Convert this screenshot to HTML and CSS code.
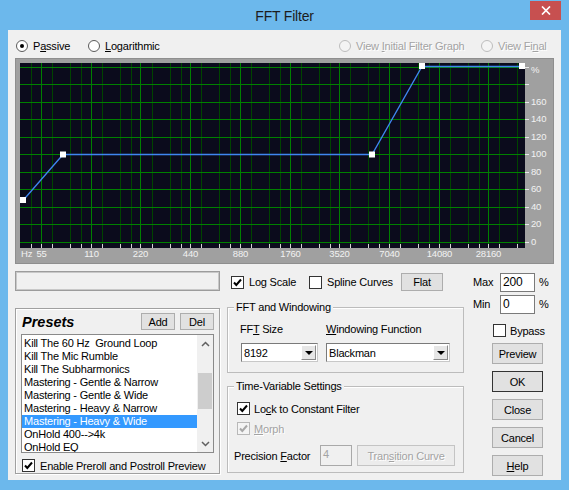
FILE: index.html
```
<!DOCTYPE html>
<html>
<head>
<meta charset="utf-8">
<link rel="stylesheet" href="styles.css">
</head>
<body>
<div class="window">
  <div class="titlebar">
    <span class="title">FFT Filter</span>
    <div class="close"><svg width="10" height="9" viewBox="0 0 10 9"><path d="M1 0.5L9 8.5M9 0.5L1 8.5" stroke="#fff" stroke-width="1.7"/></svg></div>
  </div>
  <div class="client">
    <div class="radio-row">
      <label class="opt w-passive"><span class="radio on"></span><span>P<u>a</u>ssive</span></label>
      <label class="opt w-log"><span class="radio"></span><span><u>L</u>ogarithmic</span></label>
      <label class="opt w-initial dis"><span class="radio"></span><span>View <u>I</u>nitial Filter Graph</span></label>
      <label class="opt dis"><span class="radio"></span><span>View Fi<u>n</u>al</span></label>
    </div>

    <div class="graph">
      <svg width="539" height="206" viewBox="15 57 539 206">
        <rect x="15.5" y="57.5" width="538" height="205" fill="#a0a0a0" stroke="#8e8e8e"/>
        <rect x="20" y="62" width="505" height="185" fill="#0b0b1c"/>
        <path stroke="#004400" stroke-width="1" shape-rendering="crispEdges" d="M31.5 62V247M52.5 62V247M70.5 62V247M81.5 62V247M102.5 62V247M120.5 62V247M131.5 62V247M152.5 62V247M170.5 62V247M181.5 62V247M201.5 62V247M219.5 62V247M230.5 62V247M251.5 62V247M269.5 62V247M280.5 62V247M301.5 62V247M319.5 62V247M330.5 62V247M350.5 62V247M368.5 62V247M379.5 62V247M400.5 62V247M418.5 62V247M429.5 62V247M450.5 62V247M468.5 62V247M479.5 62V247M499.5 62V247M517.5 62V247"/>
        <path stroke="#008000" stroke-width="1" shape-rendering="crispEdges" d="M20 66.5H525M20 83.5H525M20 101.5H525M20 118.5H525M20 136.5H525M20 153.5H525M20 171.5H525M20 188.5H525M20 206.5H525M20 223.5H525M20 241.5H525"/>
        <path stroke="#008000" stroke-width="1" shape-rendering="crispEdges" d="M41.5 62V247M91.5 62V247M140.5 62V247M190.5 62V247M240.5 62V247M290.5 62V247M339.5 62V247M389.5 62V247M439.5 62V247M488.5 62V247"/>
        <path stroke="#d4d4d4" stroke-width="1" shape-rendering="crispEdges" d="M31.5 243V247M41.5 243V247M52.5 243V247M70.5 243V247M81.5 243V247M91.5 243V247M102.5 243V247M120.5 243V247M131.5 243V247M140.5 243V247M152.5 243V247M170.5 243V247M181.5 243V247M190.5 243V247M201.5 243V247M219.5 243V247M230.5 243V247M240.5 243V247M251.5 243V247M269.5 243V247M280.5 243V247M290.5 243V247M301.5 243V247M319.5 243V247M330.5 243V247M339.5 243V247M350.5 243V247M368.5 243V247M379.5 243V247M389.5 243V247M400.5 243V247M418.5 243V247M429.5 243V247M439.5 243V247M450.5 243V247M468.5 243V247M479.5 243V247M488.5 243V247M499.5 243V247M517.5 243V247"/>
        <path stroke="#e8e8e8" stroke-width="1" shape-rendering="crispEdges" d="M525 66.5H529M525 83.5H529M525 101.5H529M525 118.5H529M525 136.5H529M525 153.5H529M525 171.5H529M525 188.5H529M525 206.5H529M525 223.5H529M525 241.5H529"/>
        <polyline points="23,199.5 63,153.5 372,153.5 422,65.5 522,65.5" fill="none" stroke="#3f86f0" stroke-width="1.3"/>
        <rect x="20" y="196" width="6" height="6" fill="#fff"/>
        <rect x="60" y="150.5" width="6" height="6" fill="#fff"/>
        <rect x="369" y="150.5" width="6" height="6" fill="#fff"/>
        <rect x="419" y="62" width="6" height="6" fill="#fff"/>
        <rect x="519" y="62" width="6" height="6" fill="#fff"/>
        <g font-family="Liberation Sans, Arial, sans-serif" font-size="9.5" fill="#f2f2f2">
          <text x="531" y="72">%</text>
          <text x="531" y="104">160</text>
          <text x="531" y="121">140</text>
          <text x="531" y="139">120</text>
          <text x="531" y="156">100</text>
          <text x="531" y="174">80</text>
          <text x="531" y="191">60</text>
          <text x="531" y="209">40</text>
          <text x="531" y="226">20</text>
          <text x="531" y="244">0</text>
          <text x="21" y="256">Hz</text>
          <g text-anchor="middle">
            <text x="41.5" y="256">55</text>
            <text x="91.5" y="256">110</text>
            <text x="140.5" y="256">220</text>
            <text x="190.5" y="256">440</text>
            <text x="240.5" y="256">880</text>
            <text x="290.5" y="256">1760</text>
            <text x="339.5" y="256">3520</text>
            <text x="389.5" y="256">7040</text>
            <text x="439.5" y="256">14080</text>
            <text x="488.5" y="256">28160</text>
          </g>
        </g>
      </svg>
    </div>

    <div class="lower">
      <div class="col-left">
        <div class="status"></div>
        <div class="presets">
          <div class="presets-head">
            <span class="presets-title">Presets</span>
            <button class="btn small">Add</button>
            <button class="btn small">Del</button>
          </div>
          <div class="list">
            <div class="items">
              <div class="item">Kill The 60 Hz  Ground Loop</div>
              <div class="item">Kill The Mic Rumble</div>
              <div class="item">Kill The Subharmonics</div>
              <div class="item">Mastering - Gentle &amp; Narrow</div>
              <div class="item">Mastering - Gentle &amp; Wide</div>
              <div class="item">Mastering - Heavy &amp; Narrow</div>
              <div class="item sel">Mastering - Heavy &amp; Wide</div>
              <div class="item">OnHold 400--&gt;4k</div>
              <div class="item">OnHold EQ</div>
            </div>
            <div class="sb">
              <div class="sb-btn"><svg width="9" height="6" viewBox="0 0 9 6"><polyline points="1,5 4.5,1.5 8,5" fill="none" stroke="#606060" stroke-width="1.5"/></svg></div>
              <div class="sb-track"><div class="sb-thumb"></div></div>
              <div class="sb-btn"><svg width="9" height="6" viewBox="0 0 9 6"><polyline points="1,1 4.5,4.5 8,1" fill="none" stroke="#606060" stroke-width="1.5"/></svg></div>
            </div>
          </div>
          <label class="chk enable"><span class="cb"><svg width="11" height="11" viewBox="0 0 11 11"><polyline points="2,5.5 4.3,8 9,2.5" fill="none" stroke="#000" stroke-width="2"/></svg></span><span>Enable Preroll and Postroll Preview</span></label>
        </div>
      </div>

      <div class="col-mid">
        <div class="checks">
          <label class="chk w-logscale"><span class="cb"><svg width="11" height="11" viewBox="0 0 11 11"><polyline points="2,5.5 4.3,8 9,2.5" fill="none" stroke="#000" stroke-width="2"/></svg></span><span>Log Scale</span></label>
          <label class="chk w-spline"><span class="cb"></span><span>Spline Curves</span></label>
          <button class="btn flat">Flat</button>
        </div>

        <div class="group fft">
          <span class="gtitle">FFT and Windowing</span>
          <div class="fft-labels">
            <span class="fl1">FF<u>T</u> Size</span>
            <span><u>W</u>indowing Function</span>
          </div>
          <div class="fft-selects">
            <div class="select s1"><span class="sval">8192</span><span class="sbtn"><span class="tri"></span></span></div>
            <div class="select s2"><span class="sval">Blackman</span><span class="sbtn"><span class="tri"></span></span></div>
          </div>
        </div>

        <div class="group tv">
          <span class="gtitle">Time-Variable Settings</span>
          <label class="chk lock"><span class="cb"><svg width="11" height="11" viewBox="0 0 11 11"><polyline points="2,5.5 4.3,8 9,2.5" fill="none" stroke="#000" stroke-width="2"/></svg></span><span>Lo<u>c</u>k to Constant Filter</span></label>
          <label class="chk morph dis"><span class="cb cbdis"><svg width="11" height="11" viewBox="0 0 11 11"><polyline points="2,5.5 4.3,8 9,2.5" fill="none" stroke="#a8a8a8" stroke-width="2"/></svg></span><span><u>M</u>orph</span></label>
          <div class="prec">
            <span class="prec-label">Precision <u>F</u>actor</span>
            <div class="tbox dis-box">4</div>
            <button class="btn trans dis">Tran<u>s</u>ition Curve</button>
          </div>
        </div>
      </div>

      <div class="col-right">
        <div class="numrow">
          <span class="numlabel">Max</span>
          <div class="tbox num">200</div>
          <span class="pct">%</span>
        </div>
        <div class="numrow minrow">
          <span class="numlabel">Min</span>
          <div class="tbox num">0</div>
          <span class="pct">%</span>
        </div>
        <label class="chk bypass"><span class="cb"></span><span>Bypass</span></label>
        <button class="btn side first">Preview</button>
        <button class="btn side def">OK</button>
        <button class="btn side">Close</button>
        <button class="btn side">Cancel</button>
        <button class="btn side"><u>H</u>elp</button>
      </div>
    </div>
  </div>
</div>
</body>
</html>
```

FILE: styles.css
```
* { box-sizing: border-box; }
html, body { margin: 0; padding: 0; }
body {
  width: 569px;
  height: 490px;
  overflow: hidden;
  font-family: "Liberation Sans", Arial, sans-serif;
  font-size: 11px;
  letter-spacing: -0.2px;
  color: #000;
  background: #6cb8ec;
}
u { text-decoration: underline; text-underline-offset: 1px; }

.window {
  width: 569px;
  height: 490px;
  background: #6cb8ec;
  padding: 0 8px 10px 8px;
  display: flex;
  flex-direction: column;
}
.titlebar {
  height: 30px;
  position: relative;
  display: flex;
  align-items: center;
  justify-content: center;
}
.title {
  font-size: 14px;
  letter-spacing: -0.2px;
  color: #1c1c1c;
  margin-top: 1px;
}
.close {
  position: absolute;
  right: 0;
  top: 1px;
  width: 31px;
  height: 19px;
  background: #c75050;
  display: flex;
  align-items: center;
  justify-content: center;
}
.close svg { display: block; }

.client {
  flex: 1;
  background: #f0f0f0;
  display: flex;
  flex-direction: column;
}

/* top radio row */
.radio-row {
  height: 27px;
  padding: 4px 0 0 8px;
  display: flex;
  align-items: center;
}
.opt {
  display: flex;
  align-items: center;
  gap: 5px;
  white-space: nowrap;
}
.w-passive { width: 72px; }
.w-log { width: 251px; }
.w-initial { width: 142px; }
.radio {
  width: 12px;
  height: 12px;
  border-radius: 50%;
  border: 1px solid #5a5a5a;
  background: #fff;
  display: flex;
  align-items: center;
  justify-content: center;
  flex: none;
}
.radio.on::after {
  content: "";
  width: 4px;
  height: 4px;
  border-radius: 50%;
  background: #000;
}
.dis { color: #a3a3a3; text-shadow: 1px 1px 0 #fff; }
.dis .radio { border-color: #bdbdbd; background: #f4f4f4; }

/* graph */
.graph {
  margin: 1px 0 0 7px;
  width: 539px;
  height: 206px;
}
.graph svg { display: block; }

/* lower area */
.lower {
  flex: 1;
  display: flex;
}
.col-left {
  margin-left: 7px;
  width: 205px;
  display: flex;
  flex-direction: column;
}
.col-mid {
  margin-left: 7px;
  width: 237px;
  display: flex;
  flex-direction: column;
}
.col-right {
  margin-left: 9px;
  width: 81px;
  display: flex;
  flex-direction: column;
}

.status {
  margin-top: 7px;
  height: 20px;
  border: 1px solid #9c9c9c;
  box-shadow: inset 0 0 0 1px #c8c8c8;
}

/* presets */
.presets {
  margin-top: 17px;
  height: 166px;
  border: 1px solid #a0a0a0;
  box-shadow: inset 1px 1px 0 #fff, 1px 1px 0 #fff;
  padding: 0 5px;
  display: flex;
  flex-direction: column;
}
.presets-head {
  height: 25px;
  display: flex;
  align-items: center;
  gap: 5px;
}
.presets-title {
  margin-left: 1px;
  margin-right: auto;
  font-weight: bold;
  font-style: italic;
  font-size: 14.5px;
  letter-spacing: 0;
}
.btn {
  font-family: "Liberation Sans", Arial, sans-serif;
  font-size: 11px;
  letter-spacing: -0.2px;
  color: #000;
  background: #e1e1e1;
  border: 1px solid #adadad;
  padding: 0;
  margin: 0;
  display: flex;
  align-items: center;
  justify-content: center;
}
.btn.small { width: 34px; height: 17px; }

.list {
  height: 119px;
  border: 1px solid #8a8a8a;
  background: #fff;
  display: flex;
}
.items {
  flex: 1;
  padding-top: 2px;
  overflow: hidden;
}
.item {
  height: 13px;
  line-height: 13px;
  padding-left: 2px;
  white-space: pre;
}
.item.sel { background: #3399ff; color: #fff; }
.sb {
  width: 16px;
  background: #f0f0f0;
  display: flex;
  flex-direction: column;
}
.sb-btn {
  height: 17px;
  display: flex;
  align-items: center;
  justify-content: center;
}
.sb-btn svg { display: block; }
.sb-track { flex: 1; }
.sb-thumb {
  margin: 21px 1px 0 1px;
  height: 36px;
  background: #cdcdcd;
}

.chk {
  display: flex;
  align-items: center;
  gap: 5px;
  white-space: nowrap;
}
.cb {
  width: 13px;
  height: 13px;
  border: 1px solid #333;
  background: #fff;
  display: flex;
  align-items: center;
  justify-content: center;
  flex: none;
}
.cb svg { display: block; }
.cb.cbdis { border-color: #b8b8b8; background: #f4f4f4; }
.enable {
  margin-top: 6px;
  margin-left: 1px;
  height: 13px;
}

/* middle */
.checks {
  margin-top: 9px;
  height: 18px;
  display: flex;
  align-items: center;
}
.w-logscale { margin-left: 4px; width: 78px; }
.w-spline { width: 92px; }
.btn.flat { width: 42px; height: 18px; }

.group {
  border: 1px solid #bcbcbc;
  box-shadow: inset 1px 1px 0 #fff;
  display: flex;
  flex-direction: column;
}
.gtitle {
  align-self: flex-start;
  margin: -7px 0 0 6px;
  padding: 0 2px;
  background: #f0f0f0;
  height: 13px;
  line-height: 13px;
  white-space: nowrap;
}
.fft {
  margin-top: 16px;
  height: 66px;
}
.fft-labels {
  display: flex;
  margin-top: 9px;
  padding-left: 12px;
  height: 13px;
  line-height: 13px;
}
.fl1 { width: 86px; }
.fft-selects {
  display: flex;
  margin-top: 7px;
  padding-left: 13px;
  gap: 8px;
}
.select {
  height: 19px;
  border: 1px solid #7a7a7a;
  border-right-color: #c8c8c8;
  border-bottom-color: #c8c8c8;
  background: #fff;
  display: flex;
  align-items: center;
}
.s1 { width: 77px; }
.s2 { width: 124px; }
.sval { flex: 1; padding-left: 2px; }
.sbtn {
  width: 15px;
  height: 15px;
  margin-right: 1px;
  background: #e6e6e6;
  border: 1px solid;
  border-color: #fff #8a8a8a #8a8a8a #fff;
  display: flex;
  align-items: center;
  justify-content: center;
}
.tri {
  width: 0;
  height: 0;
  border-left: 4px solid transparent;
  border-right: 4px solid transparent;
  border-top: 4px solid #000;
}

.tv {
  margin-top: 13px;
  height: 87px;
}
.lock {
  margin-top: 9px;
  padding-left: 9px;
  height: 13px;
  gap: 4px;
}
.morph {
  margin-top: 7px;
  padding-left: 9px;
  height: 13px;
  gap: 4px;
}
.prec {
  margin-top: 10px;
  padding-left: 6px;
  height: 21px;
  display: flex;
  align-items: center;
}
.prec-label { width: 86px; }
.tbox {
  border: 1px solid #7a7a7a;
  background: #fff;
  display: flex;
  align-items: center;
  padding-left: 2px;
}
.dis-box {
  width: 32px;
  height: 21px;
  background: #f0f0f0;
  border-color: #a9a9a9;
  color: #a3a3a3;
  align-items: flex-start;
  padding-top: 2px;
}
.btn.trans {
  margin-left: 5px;
  width: 98px;
  height: 21px;
  background: #ececec;
  border-color: #c4c4c4;
}
.btn.dis { color: #a3a3a3; text-shadow: 1px 1px 0 #fff; }

/* right */
.numrow {
  margin-top: 9px;
  height: 18px;
  display: flex;
  align-items: center;
}
.minrow { margin-top: 4px; }
.numlabel { width: 27px; }
.tbox.num {
  width: 35px;
  height: 19px;
  font-size: 12px;
}
.pct { margin-left: 4px; }
.bypass {
  margin-top: 11px;
  padding-left: 20px;
  height: 13px;
  gap: 4px;
}
.btn.side {
  margin: 7px 0 0 19px;
  width: 51px;
  height: 21px;
}
.btn.side.first { margin-top: 6px; }
.btn.side.def { border-color: #333; }
```
